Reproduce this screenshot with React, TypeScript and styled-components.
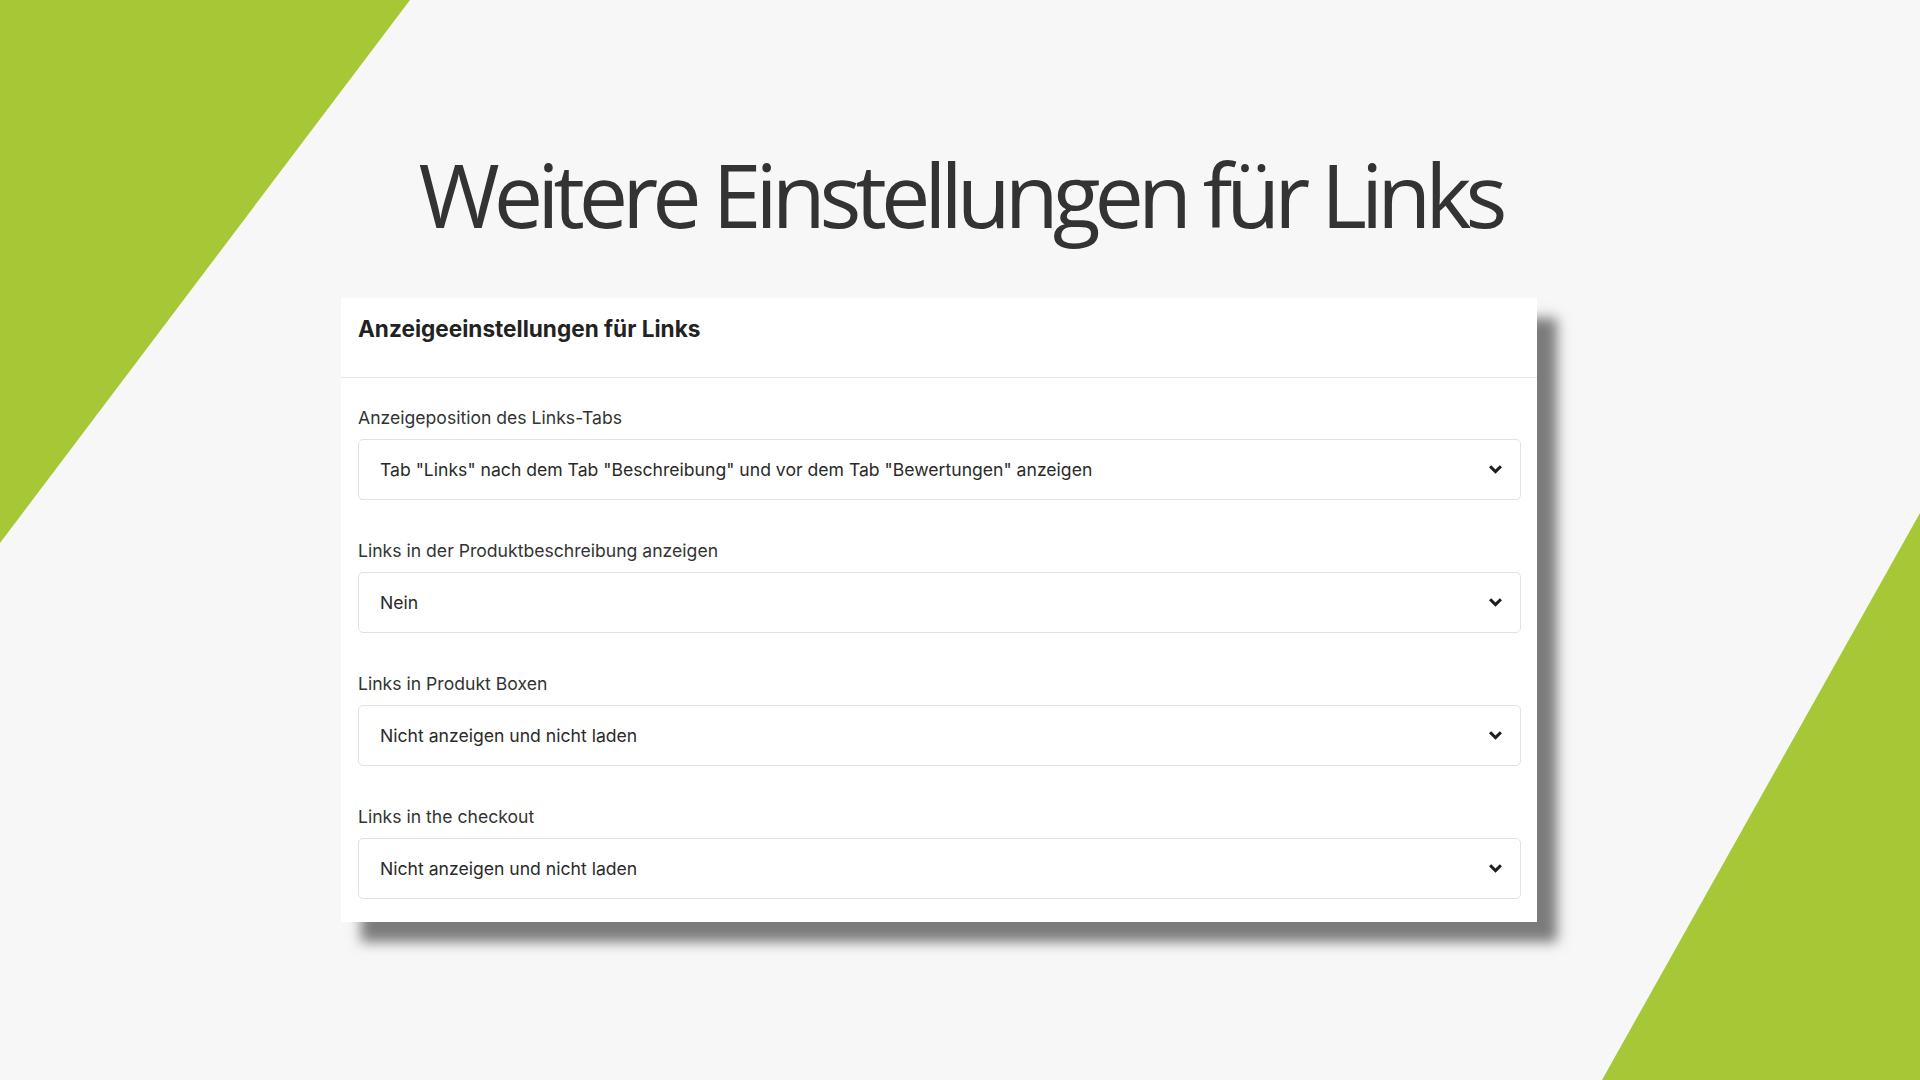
import React from 'react';
import styled, { createGlobalStyle } from 'styled-components';

const GlobalStyle = createGlobalStyle`
  html, body {
    margin: 0;
    padding: 0;
    background: #f7f7f7;
  }
  * {
    box-sizing: border-box;
  }
`;

const Slide = styled.div`
  position: relative;
  width: 1920px;
  height: 1080px;
  overflow: hidden;
  background: #f7f7f7;
  display: flex;
  flex-direction: column;
  align-items: center;
`;

const Backdrop = styled.svg`
  position: absolute;
  top: 0;
  left: 0;
  width: 1920px;
  height: 1080px;
  pointer-events: none;
`;

const Title = styled.h1`
  position: relative;
  margin: 134px 0 0;
  font-family: 'Open Sans', sans-serif;
  font-weight: 400;
  font-size: 88px;
  line-height: 120px;
  letter-spacing: -6px;
  color: #333333;
`;

const Panel = styled.section`
  position: relative;
  width: 1196px;
  margin: 44px 0 0 -42px;
  background: #ffffff;
  box-shadow: 20px 20px 12px rgba(0, 0, 0, 0.5);
  font-family: Inter, 'Noto Sans', sans-serif;
`;

const PanelHeader = styled.header`
  height: 80px;
  padding: 18px 17px 0;
  border-bottom: 1px solid #e8e8e8;
`;

const PanelTitle = styled.h2`
  margin: 0;
  font-size: 22.6px;
  line-height: 26px;
  font-weight: 700;
  color: #222222;
`;

const PanelBody = styled.div`
  display: flex;
  flex-direction: column;
  gap: 39px;
  padding: 28px 16px 23px 17px;
`;

const Field = styled.div`
  display: flex;
  flex-direction: column;
  gap: 9px;
`;

const Label = styled.label`
  font-size: 17.6px;
  line-height: 24px;
  color: #333333;
`;

const SelectBox = styled.div`
  display: flex;
  align-items: center;
  justify-content: space-between;
  height: 61px;
  padding: 0 18px 0 21px;
  border: 1px solid #e2e2e2;
  border-radius: 5px;
  font-size: 17.6px;
  color: #2a2a2a;
`;

const ChevronIcon = styled.svg`
  width: 13px;
  height: 9px;
  flex: none;
`;

const Chevron = () => (
  <ChevronIcon viewBox="0 0 14 9.4">
    <polygon points="0,2.4 2.4,0 7,4.6 11.6,0 14,2.4 7,9.4" fill="#1e1e1e" />
  </ChevronIcon>
);

const fields = [
  {
    label: 'Anzeigeposition des Links-Tabs',
    value: 'Tab "Links" nach dem Tab "Beschreibung" und vor dem Tab "Bewertungen" anzeigen',
  },
  { label: 'Links in der Produktbeschreibung anzeigen', value: 'Nein' },
  { label: 'Links in Produkt Boxen', value: 'Nicht anzeigen und nicht laden' },
  { label: 'Links in the checkout', value: 'Nicht anzeigen und nicht laden' },
];

const App = () => (
  <>
    <GlobalStyle />
    <Slide>
      <Backdrop viewBox="0 0 1920 1080">
        <polygon points="0,0 410,0 0,543" fill="#a6c736" />
        <polygon points="1920,513 1920,1080 1602,1080" fill="#a6c736" />
      </Backdrop>
      <Title>Weitere Einstellungen für Links</Title>
      <Panel>
        <PanelHeader>
          <PanelTitle>Anzeigeeinstellungen für Links</PanelTitle>
        </PanelHeader>
        <PanelBody>
          {fields.map((f) => (
            <Field key={f.label}>
              <Label>{f.label}</Label>
              <SelectBox>
                <span>{f.value}</span>
                <Chevron />
              </SelectBox>
            </Field>
          ))}
        </PanelBody>
      </Panel>
    </Slide>
  </>
);

export default App;
